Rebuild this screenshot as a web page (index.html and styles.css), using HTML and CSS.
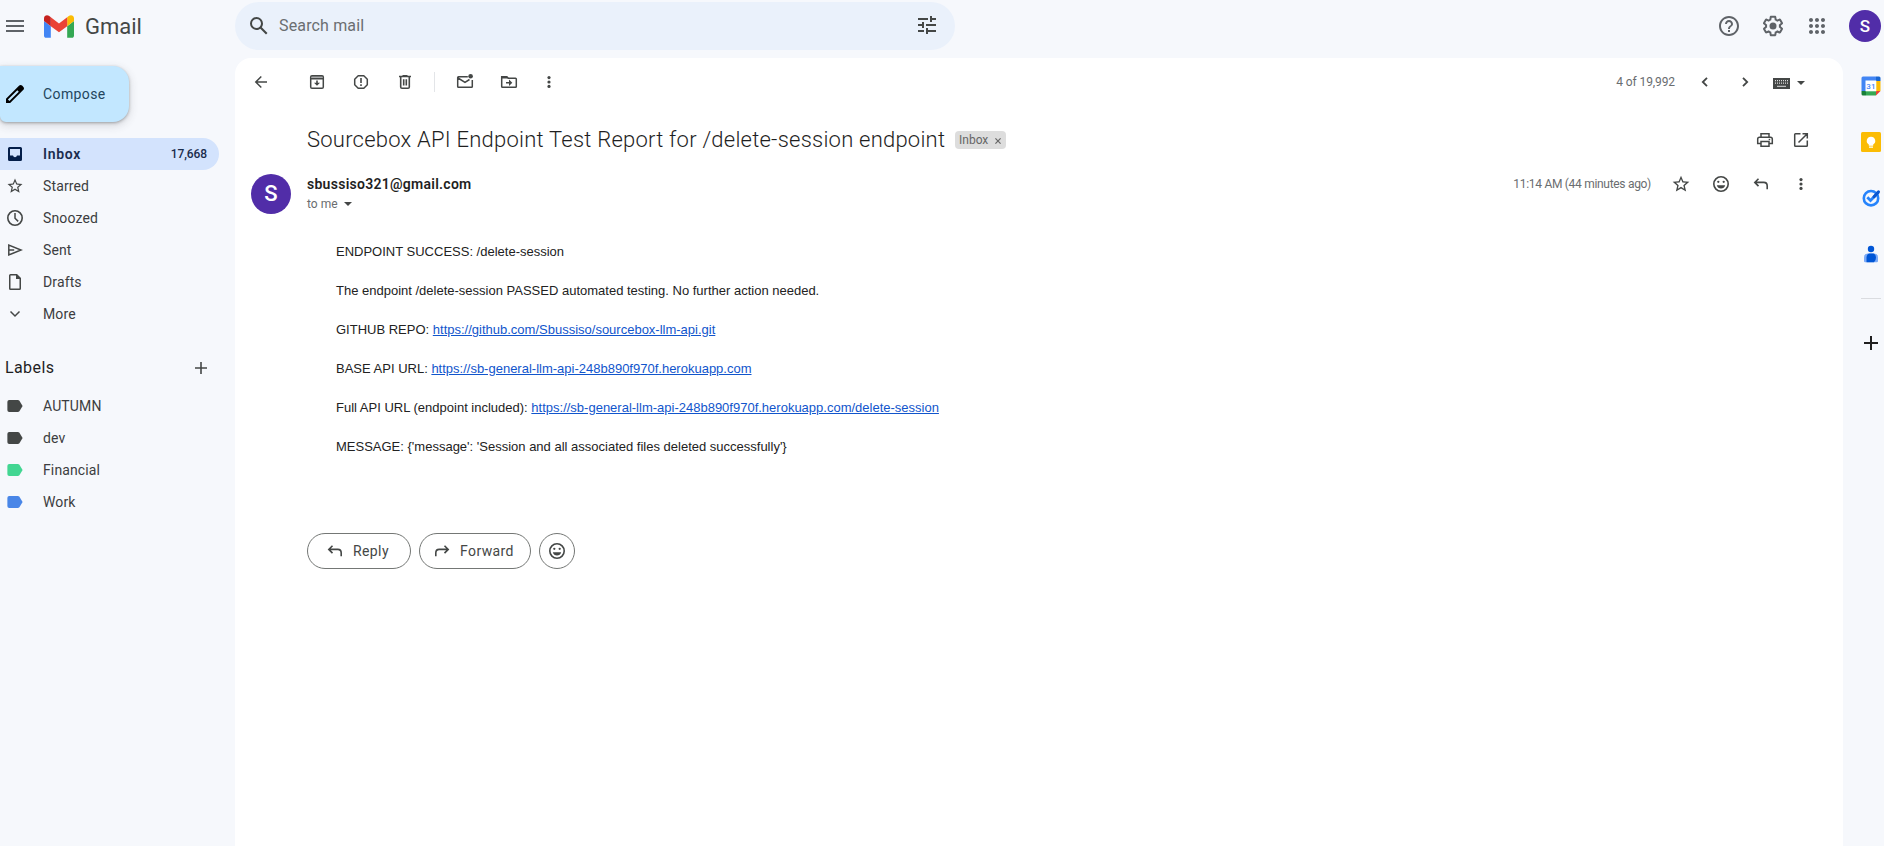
FILE: index.html
```html
<!DOCTYPE html>
<html lang="en">
<head>
<meta charset="utf-8">
<title>Gmail</title>
<link rel="stylesheet" href="styles.css">
</head>
<body>
<svg class="defs" aria-hidden="true">
  <symbol id="star" viewBox="0 0 24 24"><path d="M22 9.24l-7.19-.62L12 2 9.19 8.63 2 9.24l5.46 4.73L5.82 21 12 17.27 18.18 21l-1.63-7.03L22 9.24zM12 15.4l-3.76 2.27 1-4.28-3.32-2.88 4.38-.38L12 6.1l1.71 4.04 4.38.38-3.32 2.88 1 4.28L12 15.4z"/></symbol>
  <symbol id="more" viewBox="0 0 20 20"><circle cx="10" cy="5.6" r="1.6"/><circle cx="10" cy="10" r="1.6"/><circle cx="10" cy="14.4" r="1.6"/></symbol>
  <symbol id="reply" viewBox="0 0 20 20"><path d="M7.5 4.7 3.8 8.4l3.7 3.7M4.2 8.4h8.6q3.4 0 3.4 3.6v3.2" fill="none" stroke="currentColor" stroke-width="1.6"/></symbol>
  <symbol id="emoji" viewBox="0 0 20 20"><circle cx="10" cy="10" r="7.2" fill="none" stroke="currentColor" stroke-width="1.6"/><circle cx="7.3" cy="7.8" r="1.15"/><circle cx="12.7" cy="7.8" r="1.15"/><path d="M5.8 11.2h8.4Q13.2 14.4 10 14.4T5.8 11.2z"/></symbol>
  <symbol id="tag" viewBox="0 0 20 20"><path d="M4.200 4H12.800q1 0 1.600.8L17.600 10l-3.200 5.200q-.6.8-1.600.8H4.200Q2.400 16 2.400 14.200V5.800Q2.400 4 4.200 4z"/></symbol>
  <symbol id="caret" viewBox="0 0 8 4"><path d="M0 0h8L4 4z"/></symbol>
</svg>
<div class="app">
  <aside class="side">
    <div class="brand">
      <svg class="menu" viewBox="0 0 18 12"><path d="M0 0h18v2H0zM0 5h18v2H0zM0 10h18v2H0z"/></svg>
      <svg class="logo" viewBox="52 42 88 66"><path fill="#4285f4" d="M58 108h14V74L52 59v43c0 3.320 2.690 6 6 6"/><path fill="#34a853" d="M120 108h14c3.320 0 6-2.690 6-6V59l-20 15"/><path fill="#fbbc04" d="M120 48v26l20-15v-8c0-7.420-8.470-11.650-14.400-7.200"/><path fill="#ea4335" d="M72 74V48l24 18 24-18v26L96 92"/><path fill="#c5221f" d="M52 51v8l20 15V48l-5.600-4.200c-5.940-4.450-14.400-.22-14.400 7.200"/></svg>
      <span class="wordmark">Gmail</span>
    </div>
    <button class="compose"><svg class="i24" viewBox="0 0 24 24"><path d="M20.410 4.940l-1.350-1.350c-.78-.78-2.050-.78-2.830 0L3 16.820V21h4.180L20.410 7.770c.79-.78.79-2.050 0-2.830zM6.410 19.060l-1.470-1.470 9.380-9.380 1.470 1.470z"/></svg><span class="compose-text">Compose</span></button>
    <nav class="nav">
      <a class="row active"><svg class="i20" viewBox="0 0 20 20"><path fill-rule="evenodd" d="M4.500 3h11Q17 3 17 4.500v11q0 1.500-1.500 1.500h-11Q3 17 3 15.500v-11Q3 3 4.500 3zM5 5v6.500h3q.4 1.700 2 1.700t2-1.700h3V5z"/></svg><span>Inbox</span><b class="count">17,668</b></a>
      <a class="row"><svg class="i18"><use href="#star"/></svg><span>Starred</span></a>
      <a class="row"><svg class="i20" viewBox="0 0 20 20"><circle cx="10" cy="10" r="7.200" fill="none" stroke="currentColor" stroke-width="1.600"/><path d="M10 5v5.200l3.200 3.200" fill="none" stroke="currentColor" stroke-width="1.500"/></svg><span>Snoozed</span></a>
      <a class="row"><svg class="i20" viewBox="0 0 20 20"><path d="M3.800 5v10L16 10zM3.800 10h5.400" fill="none" stroke="currentColor" stroke-width="1.500"/></svg><span>Sent</span></a>
      <a class="row"><svg class="i20" viewBox="0 0 20 20"><path fill-rule="evenodd" d="M5.500 2H12l4 4v10.500q0 1.500-1.500 1.500h-9Q4 18 4 16.500v-13Q4 2 5.500 2zM5.500 3.500v13h9V7H11V3.500z"/></svg><span>Drafts</span></a>
      <a class="row"><svg class="i20" viewBox="0 0 20 20"><path d="m5.500 7.500 4.500 4.500 4.500-4.500" fill="none" stroke="currentColor" stroke-width="1.500"/></svg><span>More</span></a>
    </nav>
    <div class="labels-head"><h3>Labels</h3><svg class="plus" viewBox="0 0 12 12"><path d="M5.200 0h1.600v5.200H12v1.600H6.800V12H5.200V6.800H0V5.200h5.200z"/></svg></div>
    <nav class="nav labels">
      <a class="row"><svg class="i20 dark"><use href="#tag"/></svg><span>AUTUMN</span></a>
      <a class="row"><svg class="i20 dark"><use href="#tag"/></svg><span>dev</span></a>
      <a class="row"><svg class="i20 green"><use href="#tag"/></svg><span>Financial</span></a>
      <a class="row"><svg class="i20 blue"><use href="#tag"/></svg><span>Work</span></a>
    </nav>
  </aside>
  <div class="content">
    <header class="top">
      <div class="search">
        <svg class="i24" viewBox="0 0 24 24"><path d="M20.490 19l-5.730-5.730C15.530 12.200 16 10.910 16 9.500A6.500 6.500 0 1 0 9.500 16c1.410 0 2.700-.47 3.770-1.240L19 20.490 20.490 19zM5 9.500C5 7.010 7.010 5 9.500 5S14 7.010 14 9.500 11.990 14 9.500 14 5 11.990 5 9.500z"/></svg>
        <span class="search-text">Search mail</span>
        <svg class="i24 tune" viewBox="0 0 24 24"><path d="M3 17v2h6v-2H3zM3 5v2h10V5H3zm10 16v-2h8v-2h-8v-2h-2v6h2zM7 9v2H3v2h4v2h2V9H7zm14 4v-2H11v2h10zm-6-4h2V7h4V5h-4V3h-2v6z"/></svg>
      </div>
      <div class="account">
        <svg class="i24" viewBox="0 0 24 24"><path d="M11 18h2v-2h-2v2zm1-16C6.480 2 2 6.480 2 12s4.480 10 10 10 10-4.480 10-10S17.520 2 12 2zm0 18c-4.410 0-8-3.590-8-8s3.590-8 8-8 8 3.590 8 8-3.590 8-8 8zm0-14c-2.210 0-4 1.790-4 4h2c0-1.100.9-2 2-2s2 .9 2 2c0 2-3 1.750-3 5h2c0-2.250 3-2.500 3-5 0-2.210-1.790-4-4-4z"/></svg>
        <svg class="i24" viewBox="0 0 24 24"><path d="M13.850 22.250h-3.700c-.74 0-1.360-.54-1.450-1.270l-.27-1.890c-.27-.14-.53-.29-.79-.46l-1.800.72c-.7.26-1.470-.03-1.810-.65L2.200 15.530c-.35-.66-.2-1.440.36-1.880l1.530-1.190c-.01-.15-.02-.3-.02-.46 0-.15.01-.31.020-.46l-1.520-1.190c-.59-.45-.74-1.260-.37-1.880l1.850-3.190c.34-.62 1.110-.9 1.790-.63l1.810.73c.26-.17.52-.32.78-.46l.27-1.910c.09-.7.71-1.250 1.440-1.250h3.700c.74 0 1.360.54 1.450 1.270l.27 1.890c.27.14.53.29.79.46l1.800-.72c.71-.26 1.480.03 1.820.65l1.840 3.180c.36.66.2 1.440-.36 1.880l-1.520 1.190c.01.15.02.3.02.46s-.01.310-.02.46l1.520 1.190c.56.45.72 1.230.37 1.860l-1.860 3.220c-.34.62-1.110.9-1.800.63l-1.800-.72c-.26.17-.52.320-.78.46l-.27 1.910c-.1.680-.72 1.220-1.460 1.220zm-3.230-2h2.760l.37-2.550.53-.22c.44-.18.88-.44 1.340-.78l.45-.34 2.380.96 1.380-2.400-2.030-1.580.07-.56c.03-.26.06-.51.060-.78s-.03-.53-.06-.78l-.07-.56 2.030-1.580-1.390-2.400-2.390.96-.45-.35c-.42-.32-.87-.58-1.330-.77l-.52-.22-.37-2.550h-2.760l-.37 2.550-.53.21c-.44.19-.88.44-1.340.79l-.45.330-2.380-.95-1.390 2.390 2.030 1.580-.07.56a7 7 0 0 0-.06.79c0 .26.020.53.060.78l.07.56-2.030 1.580 1.380 2.400 2.390-.96.45.35c.43.33.86.580 1.330.77l.53.22.38 2.550z"/><circle cx="12" cy="12" r="3.500"/></svg>
        <svg class="i24" viewBox="0 0 24 24"><path d="M6 8c1.100 0 2-.9 2-2s-.9-2-2-2-2 .9-2 2 .9 2 2 2zm6 12c1.100 0 2-.9 2-2s-.9-2-2-2-2 .9-2 2 .9 2 2 2zm-6 0c1.100 0 2-.9 2-2s-.9-2-2-2-2 .9-2 2 .9 2 2 2zm0-6c1.100 0 2-.9 2-2s-.9-2-2-2-2 .9-2 2 .9 2 2 2zm6 0c1.100 0 2-.9 2-2s-.9-2-2-2-2 .9-2 2 .9 2 2 2zm4-8c0 1.100.9 2 2 2s2-.9 2-2-.9-2-2-2-2 .9-2 2zm-4 2c1.100 0 2-.9 2-2s-.9-2-2-2-2 .9-2 2 .9 2 2 2zm6 6c1.100 0 2-.9 2-2s-.9-2-2-2-2 .9-2 2 .9 2 2 2zm0 6c1.100 0 2-.9 2-2s-.9-2-2-2-2 .9-2 2 .9 2 2 2z"/></svg>
        <span class="avatar small">S</span>
      </div>
    </header>
    <div class="stage">
      <main class="mail">
        <div class="toolbar">
          <svg class="i20 back" viewBox="0 0 20 20"><path d="m10.300 4.500-5.500 5.500 5.500 5.500M4.800 10H16" fill="none" stroke="currentColor" stroke-width="1.500"/></svg>
          <span class="tool"><svg class="i20" viewBox="0 0 20 20"><path fill="#a9aaab" d="M4.500 4h11v2.500h-11z"/><path d="M5 3.700h10q1.300 0 1.300 1.300v10q0 1.300-1.300 1.300H5q-1.300 0-1.300-1.300V5q0-1.300 1.300-1.300zM4 6.800h12" fill="none" stroke="currentColor" stroke-width="1.500"/><path d="M9.200 8.500h1.600v2.200H13l-3 3-3-3h2.200z"/></svg></span>
          <span class="tool"><svg class="i20" viewBox="0 0 20 20"><path d="M7.200 3.700h5.600l3.500 3.500v5.600l-3.500 3.500H7.200l-3.500-3.500V7.200z" fill="none" stroke="currentColor" stroke-width="1.500" stroke-linejoin="round"/><path d="M9.200 6h1.600v5H9.200zM9.200 12.300h1.600v1.600H9.200z"/></svg></span>
          <span class="tool"><svg class="i20" viewBox="0 0 20 20"><path d="M5.700 5v10q0 1.300 1.300 1.300h6q1.300 0 1.300-1.300V5M4 4.500h12M7.500 3.700h5M8.700 7.200v6.300M11.300 7.200v6.300" fill="none" stroke="currentColor" stroke-width="1.600"/></svg></span>
          <i class="divider"></i>
          <span class="tool"><svg class="i20" viewBox="0 0 20 20"><path d="M12.800 4.700H3.500q-.8 0-.8.8v9q0 .8.8.8h13q.8 0 .8-.8V8M3 6l7 4.300L14.500 7.500" fill="none" stroke="currentColor" stroke-width="1.500"/><circle cx="15.600" cy="4.300" r="2.300"/></svg></span>
          <span class="tool"><svg class="i20" viewBox="0 0 20 20"><path d="M2.700 4.700h5.100l1.600 1.600h7.100q.8 0 .8.8v7.400q0 .8-.8.800h-13q-.8 0-.8-.8z" fill="none" stroke="currentColor" stroke-width="1.500"/><path d="M2.500 4.500h5.500l1.500 2h-7zM7 10h3V7.500l3.300 3.200L10 13.900v-2.400H7z"/></svg></span>
          <span class="tool kebab"><svg class="i20"><use href="#more"/></svg></span>
          <span class="pager">4 of 19,992</span>
          <svg class="i20 prev" viewBox="0 0 20 20"><path d="M12 5.800 7.800 10l4.200 4.200" fill="none" stroke="currentColor" stroke-width="1.800"/></svg>
          <svg class="i20 next" viewBox="0 0 20 20"><path d="m8 5.800 4.200 4.200L8 14.200" fill="none" stroke="currentColor" stroke-width="1.800"/></svg>
          <svg class="keyboard" viewBox="0 0 17 11"><path d="M0 0h17v11H0z"/><path d="M2 2.700h13M2 5.200h13" stroke="#ddd" stroke-width="1.200" stroke-dasharray="1 1"/><path d="M4 8.300h9" stroke="#ddd"/></svg>
          <svg class="caret"><use href="#caret"/></svg>
        </div>
        <div class="subject">
          <h2>Sourcebox API Endpoint Test Report for /delete-session endpoint</h2>
          <span class="chip"><span>Inbox</span><svg viewBox="0 0 6 6"><path d="m.4.400 5.200 5.200M5.600.4.400 5.600" stroke="currentColor" stroke-width="1.200"/></svg></span>
          <span class="subject-tools">
            <svg class="i20" viewBox="0 0 20 20"><path d="M6 7V3.700h8V7M6 13.500H2.700V9q0-1.800 1.800-1.800h11q1.800 0 1.800 1.800v4.500H14M6 11.500h8v4.800H6z" fill="none" stroke="currentColor" stroke-width="1.500"/><path d="M13.700 8.800h1.500v1.400h-1.500z"/></svg>
            <svg class="i20" viewBox="0 0 20 20"><path d="M9.500 3.700H4.500q-.8 0-.8.8v11q0 .8.8.8h11q.8 0 .8-.8v-5M11.500 3.700h4.800v4.800M16 4 7.500 12.500" fill="none" stroke="currentColor" stroke-width="1.500"/></svg>
          </span>
        </div>
        <div class="message-head">
          <span class="avatar">S</span>
          <div class="from"><b class="sender">sbussiso321@gmail.com</b><span class="to"><span>to me</span><svg class="caret"><use href="#caret"/></svg></span></div>
          <div class="meta"><span class="date">11:14 AM (44 minutes ago)</span><svg class="i20"><use href="#star"/></svg><svg class="i20"><use href="#emoji"/></svg><svg class="i20"><use href="#reply"/></svg><svg class="i20"><use href="#more"/></svg></div>
        </div>
        <div class="body">
          <p>ENDPOINT SUCCESS: /delete-session</p>
          <p>The endpoint /delete-session PASSED automated testing. No further action needed.</p>
          <p>GITHUB REPO: <a>https://github.com/Sbussiso/sourcebox-llm-api.git</a></p>
          <p>BASE API URL: <a>https://sb-general-llm-api-248b890f970f.herokuapp.com</a></p>
          <p>Full API URL (endpoint included): <a>https://sb-general-llm-api-248b890f970f.herokuapp.com/delete-session</a></p>
          <p>MESSAGE: {'message': 'Session and all associated files deleted successfully'}</p>
        </div>
        <div class="actions">
          <button class="pill reply"><svg class="i20"><use href="#reply"/></svg><span>Reply</span></button>
          <button class="pill forward"><svg class="i20 flip"><use href="#reply"/></svg><span>Forward</span></button>
          <button class="pill react"><svg class="i20"><use href="#emoji"/></svg></button>
        </div>
      </main>
      <aside class="addons">
        <svg class="i20" viewBox="0 0 20 20"><path fill="#4285f4" d="M2 .5h13V5H5v10H.5V2Q.5.500 2 .5z"/><path fill="#1967d2" d="M15 .5h3q1.500 0 1.500 1.500v3H15z"/><path fill="#fbbc04" d="M15 5h4.500v10H15z"/><path fill="#34a853" d="M5 15h10v4.500H5z"/><path fill="#188038" d="M.5 15H5v4.500H2Q.5 19.500.5 18z"/><path fill="#ea4335" d="M15 15h4.500L15 19.500z"/><path fill="#fff" d="M4.500 4.500H15.300V15.300H4.500z"/><text class="cal-day" x="9.900" y="13" text-anchor="middle">31</text></svg>
        <svg class="i20" viewBox="0 0 20 20"><rect width="20" height="20" rx="1.500" fill="#fbbc04"/><path fill="#fff" d="M10 4.700a4.200 4.200 0 0 0-2.200 7.800v1.200h4.400v-1.200A4.200 4.200 0 0 0 10 4.700zM8 14.600h4v1.200H8z"/></svg>
        <svg class="i20" viewBox="0 0 20 20"><circle cx="10" cy="10.200" r="7.200" fill="none" stroke="#2684fc" stroke-width="2.600"/><path d="m6.300 9.300 3.200 3.200L17.300 4.500" fill="none" stroke="#2684fc" stroke-width="2.800"/><path d="m13 8.700 4.500-4.800" stroke="#0b57d0" stroke-width="3" stroke-linecap="round"/></svg>
        <svg class="i20" viewBox="0 0 20 20"><circle cx="10" cy="5" r="3.200" fill="#0056d6"/><path fill="#7baaf7" d="M6.500 9.500h7q3.500 0 3.500 4V17q0 1.200-1.200 1.200H4.200Q3 18.200 3 17v-3.500q0-4 3.500-4z"/><path fill="#0056d6" d="M8 9.500h4.500q2.500 1 2.500 4T13 18.200H5.500v-5q0-2.500 2.500-3.700z"/></svg>
        <i class="addon-rule"></i>
        <svg class="addon-plus" viewBox="0 0 14 14"><path d="M6 0h2v6h6v2H8v6H6V8H0V6h6z"/></svg>
      </aside>
    </div>
  </div>
</div>
</body>
</html>
```
FILE: styles.css
```css
* { box-sizing: border-box; }
body { margin: 0; background: #f6f8fc; color: #444746; font: 14px/20px Roboto, "Liberation Sans", sans-serif; overflow: hidden; }
h2, h3, p { margin: 0; font-weight: 400; }
button { border: 0; font: inherit; color: inherit; padding: 0; background: none; }
svg { fill: currentColor; flex: none; display: block; }
span, b { white-space: nowrap; }
.defs { display: none; }
.i18 { width: 18px; height: 18px; margin: 1px; }
.i20 { width: 20px; height: 20px; }
.i24 { width: 24px; height: 24px; }
.app { display: flex; height: 846px; }

.side { width: 235px; flex: none; }
.brand { display: flex; align-items: center; height: 52px; padding-left: 6px; color: #5f6368; }
.menu { width: 18px; height: 12px; }
.logo { width: 30px; height: 23px; margin-left: 20px; }
.wordmark { margin-left: 11px; padding-top: 2px; font-size: 22px; color: #444746; }
.compose { display: flex; align-items: center; width: 129px; height: 56px; margin-top: 14px; padding-left: 3px; border-radius: 0 16px 16px 6px; background: #c2e7ff; color: #000; box-shadow: 0 1px 3px rgba(60,64,67,.4), 0 3px 8px 1px rgba(60,64,67,.16); }
.compose span { margin-left: 16px; font-weight: 450; letter-spacing: .4px; color: #23455d; }
.nav { margin-top: 16px; }
.row { display: flex; align-items: center; height: 32px; width: 219px; padding: 0 12px 0 5px; }
.row span { margin-left: 18px; letter-spacing: .13px; color: #3c3d40; }
.row.active { background: #d3e3fd; border-radius: 0 16px 16px 0; color: #041e49; }
.row.active span { font-weight: 600; letter-spacing: .7px; color: #1b2d4d; }
.count { margin-left: auto; font-size: 12px; font-weight: 500; letter-spacing: -.1px; color: #1b2d4d; }
.labels-head { display: flex; align-items: center; justify-content: space-between; height: 40px; margin-top: 18px; padding: 0 28px 0 5px; }
.labels-head h3 { font-size: 16px; letter-spacing: .4px; color: #1f1f1f; }
.plus { width: 12px; height: 12px; }
.labels { margin-top: 2px; }
.dark { color: #444746; }
.green { color: #42d692; }
.blue { color: #4986e7; }

.content { flex: 1; display: flex; flex-direction: column; }
.top { display: flex; justify-content: space-between; height: 58px; padding-top: 2px; }
.search { display: flex; align-items: center; width: 720px; height: 48px; padding: 0 16px 0 12px; border-radius: 24px; background: #eaf1fb; }
.search-text { margin-left: 8px; font-size: 16px; letter-spacing: .15px; color: #6b6e71; }
.tune { margin-left: auto; margin-top: -2px; }
.account { display: flex; align-items: center; gap: 20px; height: 48px; padding-right: 3px; color: #5f6368; }
.avatar { display: flex; align-items: center; justify-content: center; width: 40px; height: 40px; border-radius: 50%; background: #512da8; color: #fff; font-size: 22px; font-weight: 500; }
.avatar.small { width: 32px; height: 32px; font-size: 17px; }
.stage { flex: 1; display: flex; }
.mail { width: 1608px; background: #fff; border-radius: 16px 16px 0 0; }
.toolbar { display: flex; align-items: center; height: 48px; padding: 0 38px 0 16px; }
.back { margin-right: 24px; }
.tool { display: flex; justify-content: center; width: 44px; }
.tool.kebab { width: 36px; }
.divider { width: 1px; height: 20px; margin: 0 8px 0 7px; background: #e3e5e8; }
.pager, .date { font-size: 12px; color: #6a6d70; }
.pager { margin-left: auto; letter-spacing: -.1px; }
.prev { margin-left: 20px; }
.next { margin-left: 20px; }
.keyboard { width: 17px; height: 11px; margin: 2px 7px 0 18px; }
.caret { width: 8px; height: 4px; }
.toolbar .caret { margin-top: 1px; }
.subject { display: flex; align-items: center; height: 68px; padding: 0 32px 0 72px; }
.subject h2 { width: 648px; font-size: 22px; font-weight: 350; line-height: 28px; letter-spacing: .23px; white-space: nowrap; color: #1f1f1f; }
.chip { display: flex; align-items: center; width: 51px; height: 18px; padding-left: 4px; border-radius: 4px; background: #ddd; color: #666; font-size: 12px; line-height: 18px; }
.chip svg { width: 6px; height: 6px; margin: 1px 5px 0 auto; }
.subject-tools { display: flex; gap: 16px; margin-left: auto; }
.message-head { display: flex; padding: 0 32px 0 16px; }
.from { margin-left: 16px; }
.sender { display: block; color: #1f1f1f; font-weight: 600; letter-spacing: .27px; }
.to { display: flex; align-items: center; font-size: 12px; color: #6a6d70; }
.to .caret { margin-left: 6px; color: #444746; }
.meta { display: flex; align-items: center; height: 20px; margin-left: auto; gap: 20px; }
.date { letter-spacing: -.3px; }
.body { display: flex; flex-direction: column; gap: 19px; margin: 28px 0 0 101px; font: 13px/20px "Liberation Sans", Arial, sans-serif; color: #222; }
.body p { white-space: nowrap; }
.body a { color: #15c; text-decoration: underline; }
.actions { display: flex; gap: 8px; margin: 76px 0 0 72px; }
.pill { display: flex; align-items: center; height: 36px; border: 1px solid #747775; border-radius: 18px; }
.pill span { margin-left: 8px; font-weight: 450; letter-spacing: .4px; color: #444746; }
.reply { width: 104px; padding-left: 17px; }
.forward { width: 112px; padding-left: 12px; }
.react { width: 36px; justify-content: center; }
.flip { transform: scaleX(-1); }
.addons { flex: 1; display: flex; flex-direction: column; align-items: center; gap: 36px; padding: 18px 0 0 15px; }
.cal-day { font: 500 8px Roboto, sans-serif; fill: #4285f4; }
.addon-rule { width: 20px; height: 1px; margin-top: -2px; background: #dadce0; }
.addon-plus { width: 14px; height: 14px; margin-top: 1px; color: #1f1f1f; }
```
